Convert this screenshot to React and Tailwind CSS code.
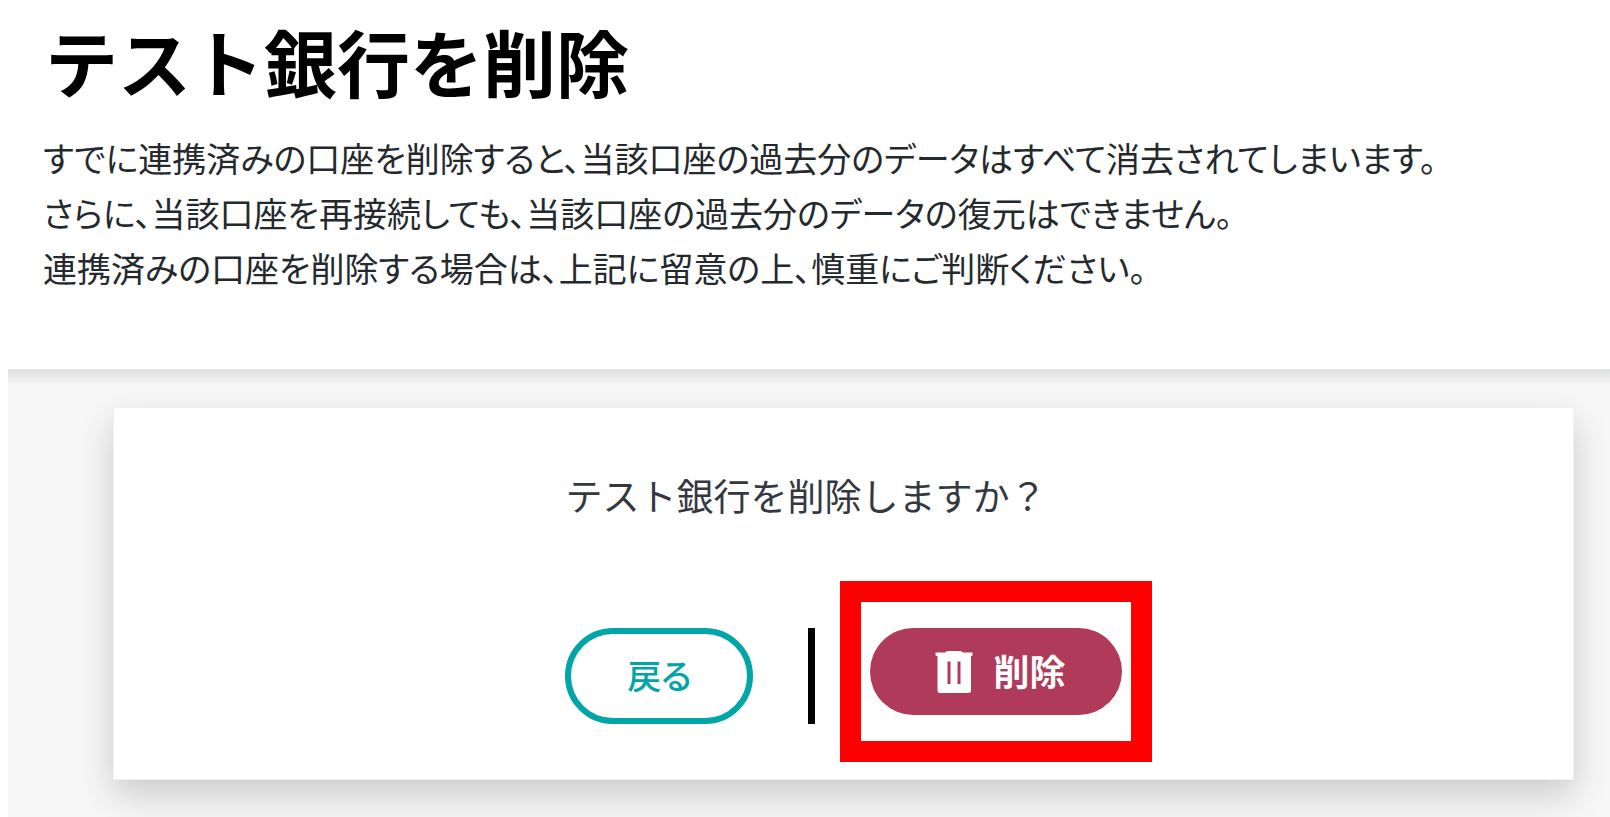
const notes = [
  "すでに連携済みの口座を削除すると、当該口座の過去分のデータはすべて消去されてしまいます。",
  "さらに、当該口座を再接続しても、当該口座の過去分のデータの復元はできません。",
  "連携済みの口座を削除する場合は、上記に留意の上、慎重にご判断ください。",
];

const TrashIcon = () => (
  <svg
    width="38"
    height="42"
    viewBox="0 0 38 42"
    fill="currentColor"
    aria-hidden="true"
  >
    <path
      fillRule="evenodd"
      d="M10 1.5 Q11 0 13 0 H25 Q27 0 28 1.5 H37.5 V4 Q37.5 5 36.5 5 H36 V39.5 Q36 42 33.5 42 H5 Q2.500 42 2.500 39.5 V5 H1.500 Q.5 5 .5 4 V1.500 Z M12.500 10.500 V33 H15.500 V10.500 Z M22.500 10.500 V33 H25.500 V10.500 Z"
    />
  </svg>
);

const App = () => {
  return (
    <main className="min-h-screen flex flex-col bg-white font-['Noto_Sans_CJK_JP',sans-serif]">
      <header className="pt-5 pb-[74px] pl-[43px]">
        <h1 className="pl-0.5 text-[73px] leading-[80px] font-bold text-black">
          テスト銀行を削除
        </h1>
        <div className="mt-[30px] text-[34px] leading-[55px] text-[#24292e] [font-feature-settings:'palt']">
          {notes.map((note) => (
            <p key={note}>{note}</p>
          ))}
        </div>
      </header>

      <section className="flex-1 ml-2 pt-9 pb-[37px] pl-[105px] pr-9 bg-linear-to-b from-[#e0e0e0] to-[#f7f7f7] to-[14px] border-t-2 border-[#dde3e6]">
        <div className="pt-[59px] pb-[55px] pl-[30.9%] bg-white border border-[#f0f0f0] shadow-[0_15px_34px_rgba(0,0,0,0.18)]">
          <p className="text-[37px] leading-[56px] text-[#343841]">
            テスト銀行を削除しますか？
          </p>

          {/* ACTIONS */}
          <div className="mt-[105px] flex items-start">
            <button
              type="button"
              className="w-[188px] h-24 pb-1 rounded-full border-6 border-[#00a5a8] text-[34px] font-medium text-[#00a5a8] [font-feature-settings:'palt']"
            >
              戻る
            </button>

            <div className="w-[7px] h-24 mx-[55px] bg-black" />

            <div className="relative">
              <button
                type="button"
                className="w-[252px] h-[87px] pl-2 rounded-full flex items-center justify-center gap-5 bg-[#b03a5a] text-[36px] font-bold text-white"
              >
                <TrashIcon />
                <span className="pb-1">削除</span>
              </button>
              <div className="absolute -inset-x-[30px] -inset-y-[47px] border-21 border-[#ff0000] pointer-events-none" />
            </div>
          </div>
        </div>
      </section>
    </main>
  );
};

export default App;
